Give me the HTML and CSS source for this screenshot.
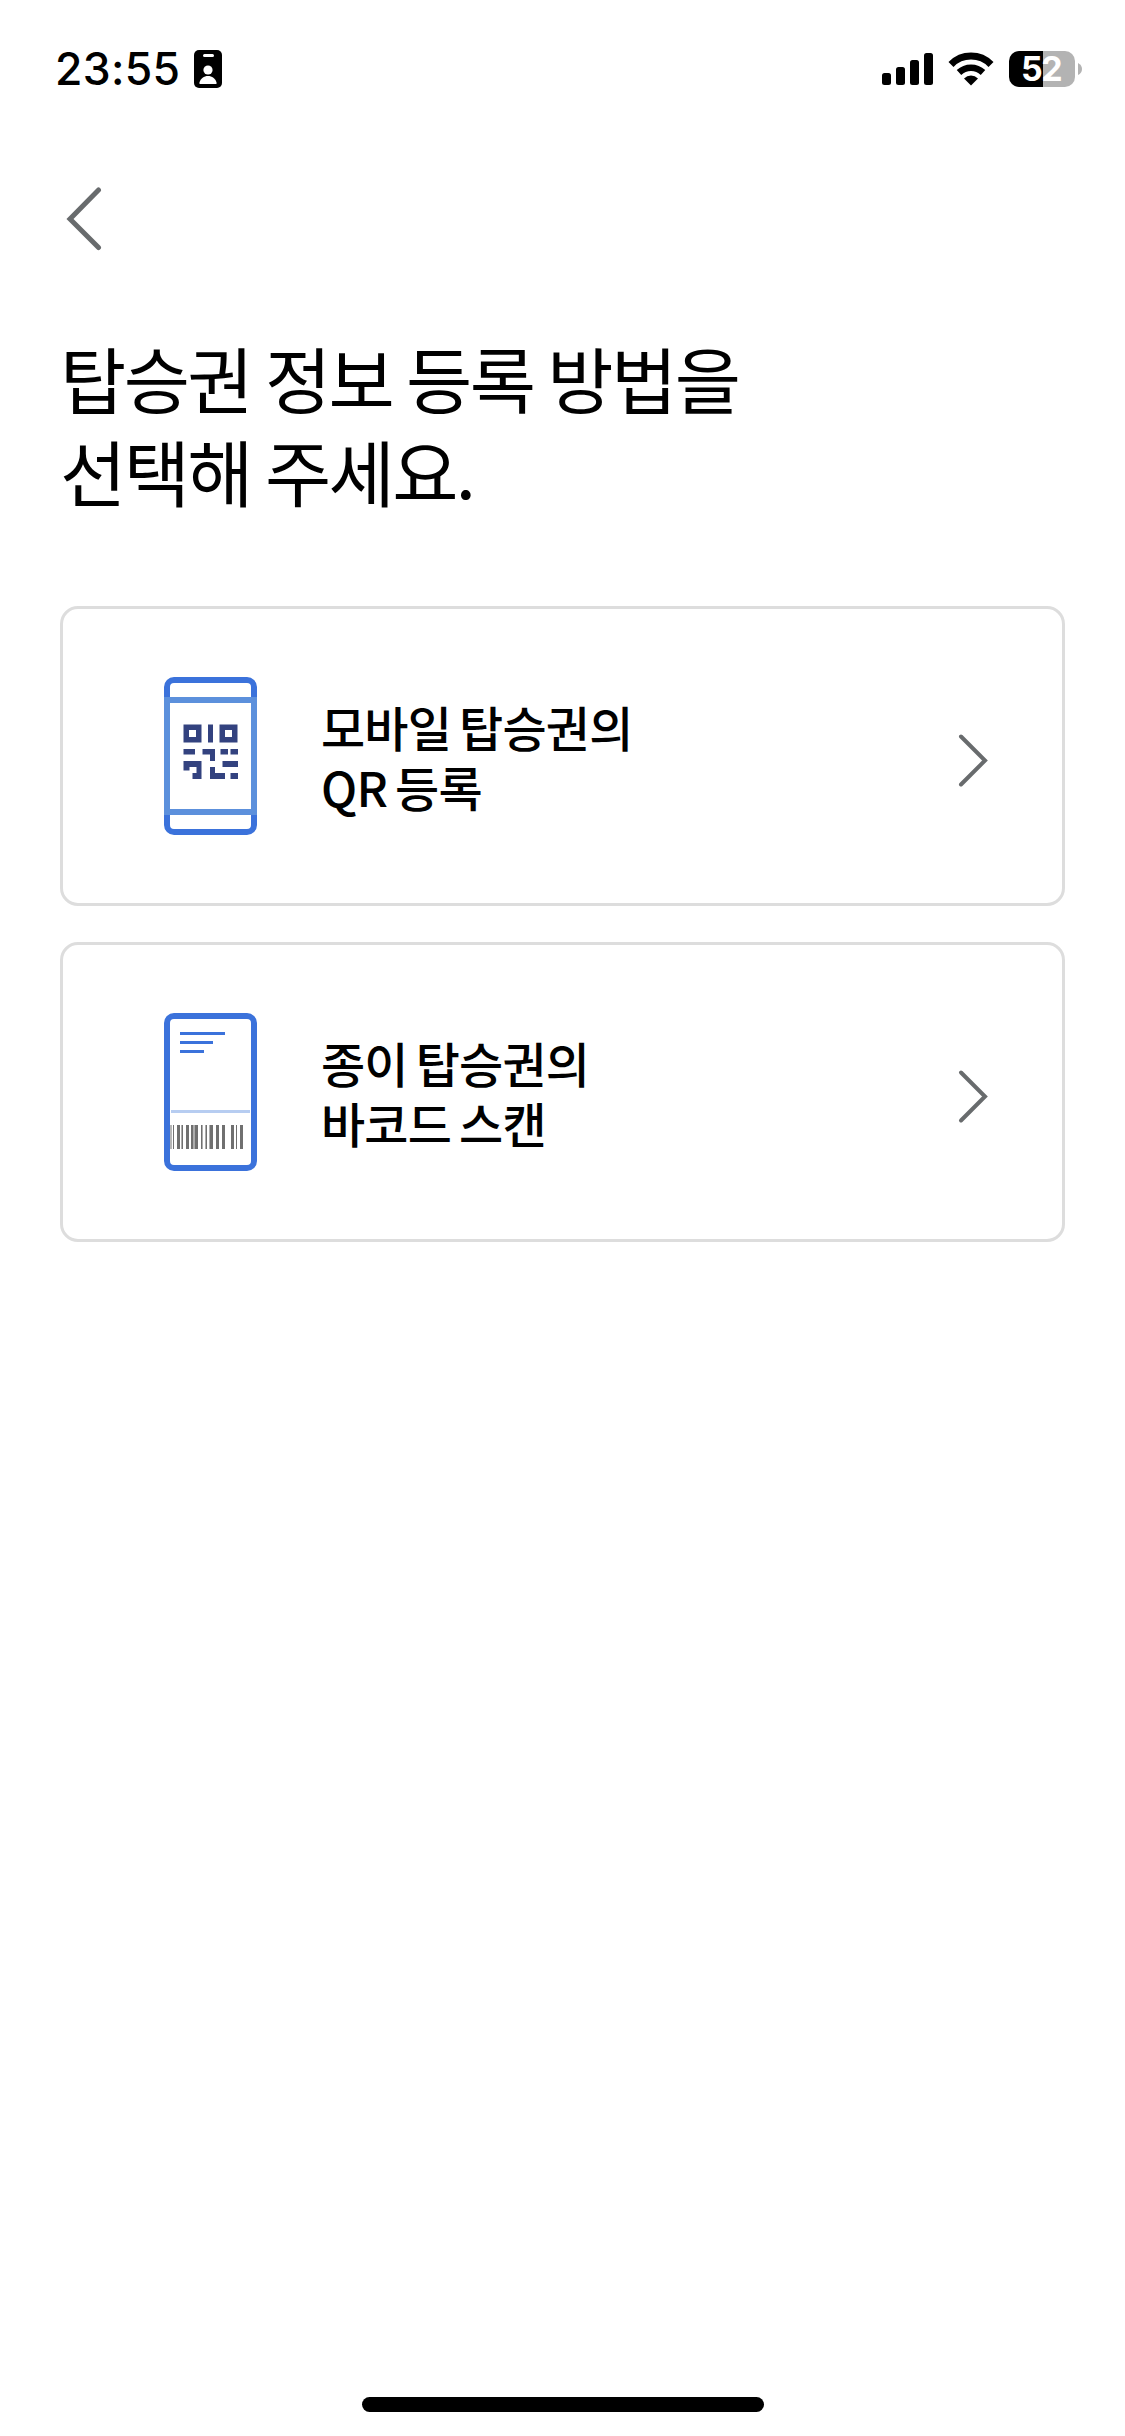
FILE: index.html
```html
<!DOCTYPE html>
<html lang="ko">
<head>
<meta charset="utf-8">
<title>탑승권 정보 등록</title>
<link rel="stylesheet" href="styles.css">
</head>
<body>
<div class="screen">
  <header class="status">
    <div class="status-left">
      <span class="time">23:55</span>
      <svg class="badge" width="28" height="38" viewBox="0 0 28 38">
        <rect width="28" height="38" rx="5"/>
        <rect x="9" y="4" width="11" height="3" rx="1.5" fill="#fff"/>
        <circle cx="14" cy="20" r="4.6" fill="#fff"/>
        <path d="M5.5 34V32.5C6.5 28.5 10 26 14 26s7.500 2.500 8.500 6.500V34z" fill="#fff"/>
      </svg>
    </div>
    <div class="status-right">
      <svg width="52" height="33" viewBox="0 0 52 33">
        <rect x="0" y="20" width="9" height="12" rx="2.500"/>
        <rect x="14" y="14" width="9" height="18" rx="2.500"/>
        <rect x="28" y="7" width="9" height="25" rx="2.500"/>
        <rect x="42" y="0" width="9" height="32" rx="2.500"/>
      </svg>
      <svg class="wifi" width="46" height="34" viewBox="0 0 46 34">
        <path d="M3 12.500A28 28 0 0 1 43 12.500" fill="none" stroke="#000" stroke-width="7"/>
        <path d="M11 20.500A17.500 17.500 0 0 1 35 20.500" fill="none" stroke="#000" stroke-width="6.600"/>
        <path d="M23 33.500L16 26.500Q19 23.500 23 23.500T30 26.500z"/>
      </svg>
      <div class="battery">52</div>
      <svg class="nub" width="4" height="12" viewBox="0 0 4 12"><path d="M0 0Q4 2 4 6T0 12z" fill="#b3b3b3"/></svg>
    </div>
  </header>

  <nav class="nav">
    <svg width="40" height="66" viewBox="0 0 40 66"><path d="M34.500 5L6 34L34.500 62.500" class="chevron back"/></svg>
  </nav>

  <main class="content">
    <h1 class="title">탑승권 정보 등록 방법을<br>선택해 주세요.</h1>

    <a class="card">
      <svg class="pass" width="93" height="158" viewBox="-0.5 0 93 158">
        <rect x="2.500" y="3" width="87" height="152" rx="7" fill="none" stroke="#3b72db" stroke-width="6"/>
        <path d="M-0.500 20H92.500V138H-0.500zM5.500 26V132H86.500V26z" fill="#5c90dc" fill-rule="evenodd"/>
        <g fill="#33427f">
          <path d="M19 47.500h18v18H19zm5.500 5.500v7h7v-7zM55 47.500h18v18H55zm5.500 5.500v7h7v-7z" fill-rule="evenodd"/>
          <path d="M43.500 47.500h5v18h-5zM19 72h11.500v5.500H19zM38 72h12.500v12H45.500v-6.500H38zM56 72h7.500v5.500H56zM66 72h7.500v5.500H66zM58 84h15.500v6H58zM66 96h7.500v6H66zM45.500 90h5v6H60.500v6H45.500zM19 84h18v18h-9v-6h4v-6h-7v3.500h-6z"/>
        </g>
      </svg>
      <span class="label">모바일 탑승권의<br>QR 등록</span>
      <svg class="go" width="32" height="58" viewBox="0 0 32 58"><path d="M4 4.500L28 28.500L4 52.500" class="chevron"/></svg>
    </a>

    <a class="card">
      <svg class="pass" width="93" height="158" viewBox="-0.5 0 93 158">
        <rect x="2.500" y="3" width="87" height="152" rx="7" fill="none" stroke="#3b72db" stroke-width="6"/>
        <path d="M15.500 19h45v3h-45zM15.500 28h33v3h-33zM15.500 37h24v3h-24z" fill="#3b72db"/>
        <rect x="6.500" y="97" width="79" height="3" fill="#b7cdf1"/>
        <path d="M6 112h1v24h-1zM8.500 112h1v24h-1zM12.500 112h3v24h-3zM17.500 112h1v24h-1zM21.500 112h3v24h-3zM26.500 112h2v24h-2zM30.500 112h3v24h-3zM36.500 112h1v24h-1zM41.500 112h1v24h-1zM45.500 112h3v24h-3zM51.500 112h3v24h-3zM57.500 112h3v24h-3zM66.500 112h3v24h-3zM71.500 112h1v24h-1zM75.500 112h3v24h-3z" fill="#707070"/>
        <path d="M16.500 112h1v24h-1zM28.500 112h2v24h-2zM37.500 112h1v24h-1zM40.500 112h1v24h-1zM44.500 112h1v24h-1z" fill="#adadad"/>
      </svg>
      <span class="label">종이 탑승권의<br>바코드 스캔</span>
      <svg class="go" width="32" height="58" viewBox="0 0 32 58"><path d="M4 4.500L28 28.500L4 52.500" class="chevron"/></svg>
    </a>
  </main>

  <div class="home-bar"></div>
</div>
</body>
</html>
```

FILE: styles.css
```css
* { box-sizing: border-box; }
body { margin: 0; background: #fff; color: #000; }
svg { display: block; flex: none; }
.screen {
  width: 1125px;
  height: 2436px;
  display: flex;
  flex-direction: column;
  font-family: "Noto Sans CJK KR", sans-serif;
}
.status {
  height: 138px;
  padding: 0 43px 0 55px;
  display: flex;
  justify-content: space-between;
  align-items: center;
}
.status-left, .status-right { display: flex; align-items: center; }
.time {
  width: 139px;
  font: 550 44.5px/54px "Inter", sans-serif;
  letter-spacing: 0.3px;
  white-space: nowrap;
}
.wifi { margin: 0 15px 0 14px; }
.battery {
  width: 66px;
  height: 36px;
  border-radius: 10px;
  background: linear-gradient(90deg, #000 34px, #b3b3b3 34px);
  color: #fff;
  font: 700 34px/36px "Inter", sans-serif;
  letter-spacing: -1.5px;
  text-indent: -2px;
  text-align: center;
}
.nub { margin-left: 3px; }
.nav { height: 192px; padding: 47px 0 0 64px; }
.chevron {
  fill: none;
  stroke: #686b6d;
  stroke-width: 4;
  stroke-linecap: round;
  stroke-linejoin: miter;
}
.back { stroke-width: 5; }
.content { flex: 1; padding: 0 60px; }
.title {
  margin: 0 0 90px;
  font-size: 72px;
  font-weight: 400;
  line-height: 93px;
  letter-spacing: -2.6px;
  word-spacing: -3.6px;
}
.card {
  height: 300px;
  margin-bottom: 36px;
  padding: 0 73px 0 101px;
  display: flex;
  align-items: center;
  border: 3px solid #ddd;
  border-radius: 18px;
}
.pass { margin-right: 64px; }
.go { margin-top: 10px; }
.label {
  flex: 1;
  font-size: 48px;
  font-weight: 500;
  line-height: 60px;
  letter-spacing: -0.8px;
  word-spacing: -4.6px;
}
.home-bar {
  width: 402px;
  height: 15px;
  margin: 0 auto 24px;
  border-radius: 8px;
  background: #000;
}
```
